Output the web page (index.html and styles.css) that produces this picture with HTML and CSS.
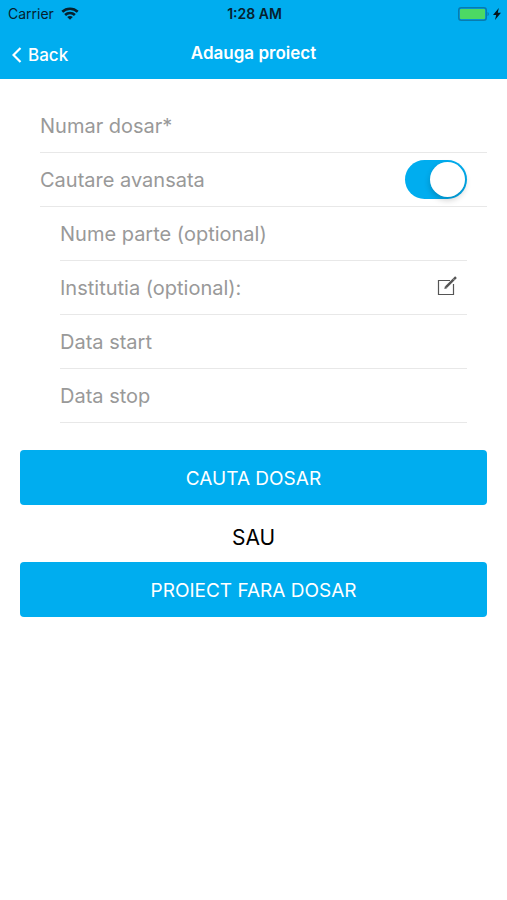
FILE: index.html
```html
<!DOCTYPE html>
<html lang="ro">
<head>
    <meta charset="UTF-8">
    <meta name="viewport" content="width=device-width, initial-scale=1.0">
    <title>Adauga proiect</title>
    <link rel="stylesheet" href="styles.css">
</head>
<body>
    <header class="header">
        <div class="status-bar">
            <div class="carrier">
                <span>Carrier</span>
                <svg width="18" height="13" viewBox="0 0 18 13" fill="none" stroke="#06212e" stroke-width="2.6">
                    <path d="M1.3 4.8C5.6 0.7 12.4 0.7 16.7 4.8"/>
                    <path d="M4.1 8C6.9 5.3 11.1 5.3 13.9 8"/>
                    <path d="M9 12.8L6.2 10C7.8 8.7 10.2 8.7 11.8 10Z" fill="#06212e" stroke="none"/>
                </svg>
            </div>
            <span class="time">1:28 AM</span>
            <div class="battery">
                <svg width="32" height="14" viewBox="0 0 32 14">
                    <rect x="0.75" y="0.75" width="27.5" height="12.5" rx="2.5" fill="none" stroke="#087bae" stroke-width="1.5"/>
                    <rect x="2" y="2" width="25" height="10" rx="1" fill="#4cd964"/>
                    <path d="M29.5 5C31.3 5.5 31.3 8.5 29.5 9Z" fill="#087bae"/>
                </svg>
                <svg width="8" height="12" viewBox="0 0 8 12" fill="#06141c">
                    <path d="M5.8 0L0 7H3.2L2 12L8 4.8H4.8Z"/>
                </svg>
            </div>
        </div>
        <nav class="nav-bar">
            <a href="#" class="back">
                <svg width="10" height="16" viewBox="0 0 10 16" fill="none" stroke="#fff" stroke-width="2.2">
                    <path d="M8.5 1L1.5 8L8.5 15"/>
                </svg>
                Back
            </a>
            <h1 class="title">Adauga proiect</h1>
        </nav>
    </header>

    <main>
        <form class="form">
            <div class="fields">
                <div class="row">
                    <input class="text-input" type="text" placeholder="Numar dosar*" aria-label="Numar dosar">
                </div>
                <div class="row row-switch">
                    <label for="advanced">Cautare avansata</label>
                    <input class="switch" type="checkbox" id="advanced" checked>
                </div>
                <div class="advanced">
                    <div class="row">
                        <input class="text-input" type="text" placeholder="Nume parte (optional)" aria-label="Nume parte">
                    </div>
                    <div class="row">
                        <span>Institutia (optional):</span>
                        <button class="edit-btn" type="button" aria-label="Alege institutia">
                            <svg width="20" height="20" viewBox="0 0 20 20" fill="none" stroke="#555">
                                <path d="M13 4.5H1.5V18.5H16.5V8" stroke-width="1.2"/>
                                <path d="M9 11.2L19 1.2" stroke-width="2.4"/>
                                <path d="M7.3 12.9L8 10L10.2 12.2Z" fill="#555" stroke="none"/>
                                <path d="M16 2.6L17.8 4.4" stroke="#fff" stroke-width="0.5"/>
                            </svg>
                        </button>
                    </div>
                    <div class="row">
                        <input class="text-input" type="text" placeholder="Data start" aria-label="Data start">
                    </div>
                    <div class="row">
                        <input class="text-input" type="text" placeholder="Data stop" aria-label="Data stop">
                    </div>
                </div>
            </div>
            <button class="btn" type="button">CAUTA DOSAR</button>
            <p class="or">SAU</p>
            <button class="btn" type="button">PROIECT FARA DOSAR</button>
        </form>
    </main>
</body>
</html>
```

FILE: styles.css
```css
* {
    box-sizing: border-box;
}
body {
    margin: 0;
    background: #fff;
    font-family: Inter, "Liberation Sans", sans-serif;
    font-size: 20px;
    color: #999;
}
.header {
    background: #00adef;
    color: #fff;
}
.status-bar {
    display: grid;
    grid-template-columns: 1fr auto 1fr;
    align-items: center;
    height: 27px;
    padding: 0 6px 0 8px;
    font-size: 14px;
    color: #06212e;
}
.carrier {
    display: flex;
    align-items: center;
    gap: 7px;
}
.time {
    font-weight: 600;
}
.battery {
    display: flex;
    align-items: center;
    justify-content: flex-end;
    gap: 3px;
}
.nav-bar {
    display: grid;
    grid-template-columns: 1fr auto 1fr;
    align-items: center;
    height: 52px;
    padding: 0 12px;
}
.back {
    display: flex;
    align-items: center;
    gap: 6px;
    padding-top: 3px;
    font-size: 17px;
    font-weight: 500;
    color: #fff;
    text-decoration: none;
}
.title {
    margin: 0;
    font-size: 17px;
    font-weight: 600;
}
.form {
    padding: 20px;
}
.fields {
    padding-left: 20px;
    margin-bottom: 27px;
}
.advanced {
    padding: 0 20px;
}
.row {
    display: flex;
    align-items: center;
    justify-content: space-between;
    height: 54px;
    border-bottom: 1px solid #e8e8e8;
}
.row-switch {
    padding-right: 20px;
}
.text-input {
    width: 100%;
    padding: 0;
    border: none;
    outline: none;
    background: none;
    font: inherit;
    color: #333;
}
.text-input::placeholder {
    color: #999;
    opacity: 1;
}
.switch {
    display: flex;
    align-items: center;
    justify-content: flex-end;
    appearance: none;
    width: 62px;
    height: 39px;
    margin: 0;
    padding: 2px;
    border-radius: 20px;
    background: #00adef;
    cursor: pointer;
}
.switch::before {
    content: "";
    width: 35px;
    height: 35px;
    border-radius: 50%;
    background: #fff;
    box-shadow: 0 3px 6px rgba(0, 0, 0, 0.2);
}
.switch:not(:checked) {
    justify-content: flex-start;
    background: #ddd;
}
.edit-btn {
    display: flex;
    padding: 0 10px 3px;
    border: none;
    background: none;
    cursor: pointer;
}
.btn {
    display: block;
    width: 100%;
    height: 55px;
    padding: 2px 0 0;
    border: none;
    border-radius: 4px;
    background: #00adef;
    font-family: inherit;
    font-size: 19px;
    color: #fff;
    cursor: pointer;
}
.or {
    margin: 0;
    padding-top: 9px;
    line-height: 48px;
    font-size: 21px;
    text-align: center;
    color: #000;
}
```
